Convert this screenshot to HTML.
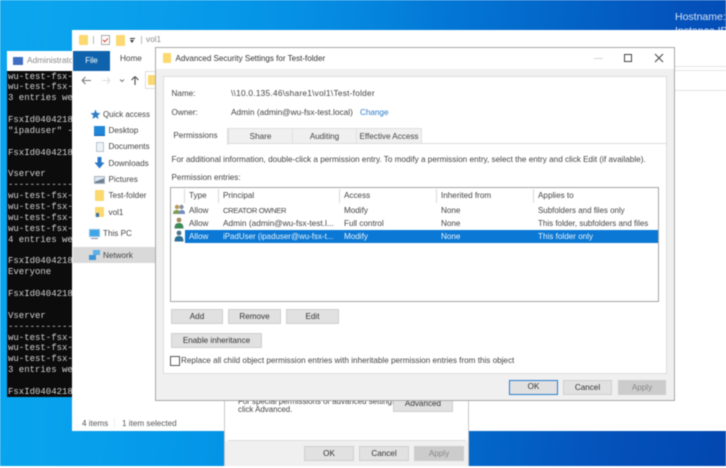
<!DOCTYPE html>
<html><head><meta charset="utf-8">
<style>
html,body{margin:0;padding:0;width:726px;height:468px;overflow:hidden;background:#fff}
#r{position:relative;width:726px;height:468px;overflow:hidden;filter:blur(.55px);font-family:"Liberation Sans",sans-serif;font-size:8.15px;line-height:11.4px;color:#333;
background:linear-gradient(100deg,#2aa6ea 0,#0a8fe4 30%,#0378d6 55%,#0452bb 85%,#0347b0 100%)}
#r div,#r span.t{position:absolute;white-space:nowrap}
.t{line-height:11px}
.btn{background:#e1e1e1;border:1px solid #cfcfcf;box-sizing:border-box;text-align:center;color:#333;line-height:14px}
.f{background:#fbd870;border-radius:1px}
pre{position:absolute;margin:0;left:8px;top:71.5px;font:9px/10.87px "Liberation Mono",monospace;color:#d0d0d0}
.h{background:#d9d9d9;width:1px;top:189px;height:14px}
</style></head><body><div id="r">
<div style="left:0;top:0;width:726px;height:468px;background:linear-gradient(90deg,rgba(0,166,240,.75) 0,rgba(0,160,238,.5) 30%,rgba(0,0,0,0) 60%)"></div>
<div style="left:675px;top:11.5px;font-size:10.5px;color:#d5e3f5">Hostname:</div>
<div style="left:675px;top:25.5px;font-size:10.5px;color:#d5e3f5">Instance ID</div>

<!-- terminal -->
<div style="left:7px;top:51px;width:70px;height:20px;background:#fff"></div>
<div style="left:13px;top:57px;width:10px;height:8px;background:#3f6fc4"></div>
<div style="left:27px;top:55px;font-size:8.4px;color:#888">Administrator</div>
<div style="left:7px;top:71px;width:70px;height:326px;background:#0c0c0c;overflow:hidden"><pre style="left:1px;top:.5px">wu-test-fsx-
wu-test-fsx-
3 entries we

FsxId0404218
"ipaduser" -

FsxId0404218

Vserver
------------
wu-test-fsx-
wu-test-fsx-
wu-test-fsx-
wu-test-fsx-
4 entries we

FsxId0404218
Everyone

FsxId0404218

Vserver
------------
wu-test-fsx-
wu-test-fsx-
wu-test-fsx-
3 entries we

FsxId0404218</pre></div>

<!-- explorer -->
<div style="left:72px;top:30px;width:654px;height:401px;background:#fff"></div>
<div class="f" style="left:79px;top:35px;width:9px;height:10px"></div>
<div style="left:93px;top:36px;width:1px;height:8px;background:#bbb"></div>
<div style="left:101px;top:35px;width:9px;height:10px;border:1px solid #aaa;box-sizing:border-box;background:#fff"></div>
<div style="left:103px;top:38px;width:5px;height:3px;border-left:1px solid #d8452a;border-bottom:1px solid #d8452a;transform:rotate(-45deg);box-sizing:border-box"></div>
<div class="f" style="left:116px;top:35px;width:9px;height:11px"></div>
<div style="left:130px;top:38px;width:5px;height:1px;background:#333"></div>
<div style="left:130px;top:40px;width:0;height:0;border:2.5px solid transparent;border-top:3px solid #333"></div>
<div style="left:141px;top:36px;width:1px;height:8px;background:#bbb"></div>
<div style="left:146px;top:34px;font-size:8.2px;color:#888">vol1</div>
<div style="left:73px;top:51px;width:37px;height:20px;background:#0f63ad;color:#fff;text-align:center;line-height:19px;font-size:7.8px">File</div>
<div style="left:120px;top:52.5px;font-size:8.2px;color:#444">Home</div>
<svg style="position:absolute;left:78px;top:73px" width="68" height="16" viewBox="0 0 68 16" fill="none">
<path d="M4 7.5h9M4 7.5l3.5-3.5M4 7.5l3.5 3.5" stroke="#777" stroke-width="1.1"/>
<path d="M24 7.5h8M32 7.5l-3-3M32 7.5l-3 3" stroke="#ddd" stroke-width="1.1"/>
<path d="M42 6.5l2 2 2-2" stroke="#777" stroke-width="1"/>
<path d="M57 12V3.5M57 3.5l-3.5 3.5M57 3.5l3.5 3.5" stroke="#555" stroke-width="1.2"/>
</svg>
<div style="left:145px;top:71px;width:12px;height:18px;border:1px solid #ddd;box-sizing:border-box;background:#fff"></div>
<div class="f" style="left:148px;top:75px;width:8px;height:10px"></div>

<!-- nav -->
<svg style="position:absolute;left:90px;top:109px" width="11" height="11" viewBox="0 0 11 11"><path d="M5.5.5l1.4 3.4 3.6.3-2.8 2.3.9 3.500-3.100-1.900-3.100 1.900.9-3.500L.5 4.200l3.600-.3z" fill="#2f7fc6"/></svg>
<div style="left:103px;top:109px;font-size:7.9px;color:#444">Quick access</div>
<div style="left:94px;top:126px;width:11px;height:9px;background:#1f86d8;border-bottom:1px solid #0f5ea8"></div>
<div style="left:108.5px;top:125px;color:#444">Desktop</div>
<div style="left:96px;top:142px;width:8px;height:10px;background:#eef3f8;border:1px solid #b8c4d0;box-sizing:border-box"></div>
<div style="left:108.5px;top:141px;color:#444">Documents</div>
<svg style="position:absolute;left:94px;top:157px" width="11" height="12" viewBox="0 0 11 12"><path d="M3.5 0h4v5.500h3L5.500 11.500.5 5.500h3z" fill="#2b79c8"/></svg>
<div style="left:108.5px;top:157.5px;color:#444">Downloads</div>
<div style="left:94px;top:176px;width:11px;height:8px;background:linear-gradient(160deg,#dfe6ee 50%,#6b8296 50%);border:1px solid #a9b5c0;box-sizing:border-box"></div>
<div style="left:108.5px;top:174px;color:#444">Pictures</div>
<div class="f" style="left:95px;top:190px;width:9px;height:11px"></div>
<div style="left:108.5px;top:190px;color:#444">Test-folder</div>
<div class="f" style="left:95px;top:207px;width:9px;height:10px"></div>
<div style="left:96px;top:213px;width:3px;height:4px;background:#3b6fb5"></div>
<div style="left:108.5px;top:206.5px;color:#444">vol1</div>
<div style="left:89px;top:229px;width:11px;height:8px;background:#3fa4e6;border:1px solid #8bbfe0;box-sizing:border-box"></div>
<div style="left:91px;top:238px;width:7px;height:1px;background:#88a"></div>
<div style="left:103px;top:228px;color:#444">This PC</div>
<div style="left:73px;top:247px;width:83px;height:16px;background:#d9d9d9"></div>
<svg style="position:absolute;left:88px;top:249px" width="13" height="12" viewBox="0 0 13 12"><path d="M1 6h7v5H1z" fill="#3f94d6"/><path d="M5 1h7v5H5z" fill="#5fb0e8"/></svg>
<div style="left:103px;top:250px;color:#444">Network</div>
<div style="left:82px;top:418px;color:#555">4 items</div>
<div style="left:114px;top:418px;width:1px;height:10px;background:#eee"></div>
<div style="left:122px;top:418px;color:#555">1 item selected</div>
<div style="left:155px;top:66px;width:571px;height:1px;background:#e4e4e4"></div>
<div style="left:155px;top:70px;width:571px;height:1px;background:#e4e4e4"></div>
<div style="left:155px;top:90px;width:571px;height:1px;background:#e4e4e4"></div>

<!-- back dialog -->
<div style="left:224px;top:395px;width:245px;height:71px;background:#fff;border:1px solid #c9c9c9;border-top:0;box-sizing:border-box"></div>
<div style="left:228px;top:440px;width:238px;height:1px;background:#dcdcdc"></div>
<div style="left:224px;top:441px;width:245px;height:25px;background:#f0f0f0;border-left:1px solid #c9c9c9;border-right:1px solid #c9c9c9;box-sizing:border-box"></div>
<div style="left:238px;top:395.5px;font-size:7.9px;color:#444">For special permissions or advanced settings,</div>
<div style="left:238px;top:404px;font-size:7.9px;color:#444">click Advanced.</div>
<div class="btn" style="left:393px;top:395px;width:60px;height:17px;padding-top:1px">Advanced</div>
<div class="btn" style="left:304px;top:446px;width:50px;height:15px;line-height:13px">OK</div>
<div class="btn" style="left:359px;top:446px;width:50px;height:15px;line-height:13px">Cancel</div>
<div class="btn" style="left:414px;top:446px;width:50px;height:15px;line-height:13px;background:#ccc;border-color:#ccc;color:#888">Apply</div>

<!-- main dialog -->
<div style="left:155px;top:47px;width:520px;height:354px;background:#f0f0f0;border:1px solid #a8a8a8;box-sizing:border-box"></div>
<div style="left:156px;top:48px;width:518px;height:21px;background:#fff"></div>
<div class="f" style="left:163px;top:53px;width:8px;height:10px"></div>
<div style="left:175.5px;top:52.5px;font-size:8.05px;color:#333">Advanced Security Settings for Test-folder</div>
<div style="left:594px;top:58px;width:9px;height:1px;background:#d5d5d5"></div>
<div style="left:624px;top:54px;width:8px;height:8px;border:1px solid #444;box-sizing:border-box"></div>
<svg style="position:absolute;left:654px;top:53px" width="10" height="10" viewBox="0 0 10 10"><path d="M1 1l8 8M9 1l-8 8" stroke="#444" stroke-width="1"/></svg>

<div style="left:163px;top:76px;width:504px;height:298px;background:#fff;border:1px solid #dcdcdc;box-sizing:border-box"></div>
<div style="left:171.5px;top:88px;color:#444">Name:</div>
<div style="left:231px;top:88px;color:#444;font-size:8.3px;letter-spacing:.25px">\\10.0.135.46\share1\vol1\Test-folder</div>
<div style="left:171.5px;top:107px;color:#444">Owner:</div>
<div style="left:231px;top:106.5px;color:#444;font-size:8.3px">Admin (admin@wu-fsx-test.local)</div>
<div style="left:360px;top:106.5px;color:#2a7bc8">Change</div>

<!-- tabs -->
<div style="left:164px;top:143px;width:502px;height:1px;background:#dcdcdc"></div>
<div style="left:228px;top:128px;width:65px;height:15px;background:#f0f0f0;border:1px solid #e0e0e0;border-bottom:0;box-sizing:border-box;text-align:center;line-height:15px;color:#444">Share</div>
<div style="left:292px;top:128px;width:65px;height:15px;background:#f0f0f0;border:1px solid #e0e0e0;border-bottom:0;box-sizing:border-box;text-align:center;line-height:15px;color:#444">Auditing</div>
<div style="left:356px;top:128px;width:66px;height:15px;background:#f0f0f0;border:1px solid #e0e0e0;border-bottom:0;box-sizing:border-box;text-align:center;line-height:15px;color:#444">Effective Access</div>
<div style="left:164px;top:128px;width:64px;height:17px;background:#fff;border-right:1px solid #dcdcdc;box-sizing:border-box;text-align:center;line-height:15px;color:#444">Permissions</div>

<div style="left:171.5px;top:154px;font-size:8.17px;color:#444">For additional information, double-click a permission entry. To modify a permission entry, select the entry and click Edit (if available).</div>
<div style="left:171.5px;top:172px;color:#444">Permission entries:</div>

<!-- list -->
<div style="left:170px;top:187px;width:489px;height:115px;background:#fff;border:1px solid #a6a6a6;box-sizing:border-box"></div>
<div class="h" style="left:184px"></div><div class="h" style="left:218px"></div><div class="h" style="left:339px"></div><div class="h" style="left:436px"></div><div class="h" style="left:533px"></div>
<div style="left:189px;top:190px;color:#444">Type</div>
<div style="left:223px;top:190px;color:#444">Principal</div>
<div style="left:344px;top:190px;color:#444">Access</div>
<div style="left:441px;top:190px;color:#444">Inherited from</div>
<div style="left:538px;top:190px;color:#444">Applies to</div>

<div style="left:184.5px;top:230px;width:473.5px;height:12.5px;background:#0a78d4"></div>

<svg style="position:absolute;left:173px;top:204px" width="12" height="11" viewBox="0 0 12 11"><circle cx="4" cy="3" r="2.2" fill="#b89a5a"/><circle cx="8.5" cy="3" r="2.2" fill="#8a8fa0"/><path d="M0 10c0-3 1.5-4 4-4s3 1 3 4z" fill="#7f9a5a"/><path d="M6 10c0-3 1-4 3-4s3 1 3 4z" fill="#6f8fc0"/></svg>
<svg style="position:absolute;left:174px;top:217px" width="10" height="12" viewBox="0 0 10 12"><circle cx="5" cy="3" r="2.4" fill="#a88a5c"/><path d="M.5 11.500c0-4 1.500-5.500 4.500-5.500s4.500 1.500 4.500 5.500z" fill="#3f8a5a"/></svg>
<svg style="position:absolute;left:174px;top:230px" width="10" height="12" viewBox="0 0 10 12"><circle cx="5" cy="3" r="2.4" fill="#48748f"/><path d="M.5 11.500c0-4 1.500-5.500 4.500-5.500s4.500 1.500 4.500 5.500z" fill="#2c6f95"/></svg>

<div style="left:189px;top:205px;color:#444">Allow</div><div style="left:223px;top:205px;color:#444;font-size:7.6px;letter-spacing:-.35px">CREATOR OWNER</div><div style="left:344px;top:205px;color:#444">Modify</div><div style="left:441px;top:205px;color:#444">None</div><div style="left:538px;top:205px;color:#444;font-size:7.96px">Subfolders and files only</div>
<div style="left:189px;top:218px;color:#444">Allow</div><div style="left:223px;top:218px;color:#444;font-size:8.3px">Admin (admin@wu-fsx-test.l...</div><div style="left:344px;top:218px;color:#444">Full control</div><div style="left:441px;top:218px;color:#444">None</div><div style="left:538px;top:218px;color:#444;font-size:8px">This folder, subfolders and files</div>
<div style="left:189px;top:231px;color:#e8f3fc">Allow</div><div style="left:223px;top:231px;color:#e8f3fc;font-size:7.95px">iPadUser (ipaduser@wu-fsx-t...</div><div style="left:344px;top:231px;color:#e8f3fc">Modify</div><div style="left:441px;top:231px;color:#e8f3fc">None</div><div style="left:538px;top:231px;color:#e8f3fc">This folder only</div>

<div class="btn" style="left:171px;top:309px;width:52px;height:15px;line-height:13px">Add</div>
<div class="btn" style="left:228px;top:309px;width:53px;height:15px;line-height:13px">Remove</div>
<div class="btn" style="left:286px;top:309px;width:53px;height:15px;line-height:13px">Edit</div>
<div class="btn" style="left:171px;top:333px;width:91px;height:15px;line-height:13px">Enable inheritance</div>
<div style="left:170px;top:356px;width:10px;height:10px;background:#fff;border:1px solid #555;box-sizing:border-box"></div>
<div style="left:181px;top:354.5px;color:#444;font-size:8.13px">Replace all child object permission entries with inheritable permission entries from this object</div>

<div class="btn" style="left:509px;top:380px;width:49px;height:15px;line-height:12px;border:1.5px solid #2a7fc8">OK</div>
<div class="btn" style="left:563px;top:380px;width:49px;height:15px;line-height:13px">Cancel</div>
<div class="btn" style="left:618px;top:380px;width:48px;height:15px;line-height:13px;background:#ccc;border-color:#ccc;color:#888">Apply</div>

<div style="left:0;top:466px;width:726px;height:2px;background:#fff"></div>
</div></body></html>
